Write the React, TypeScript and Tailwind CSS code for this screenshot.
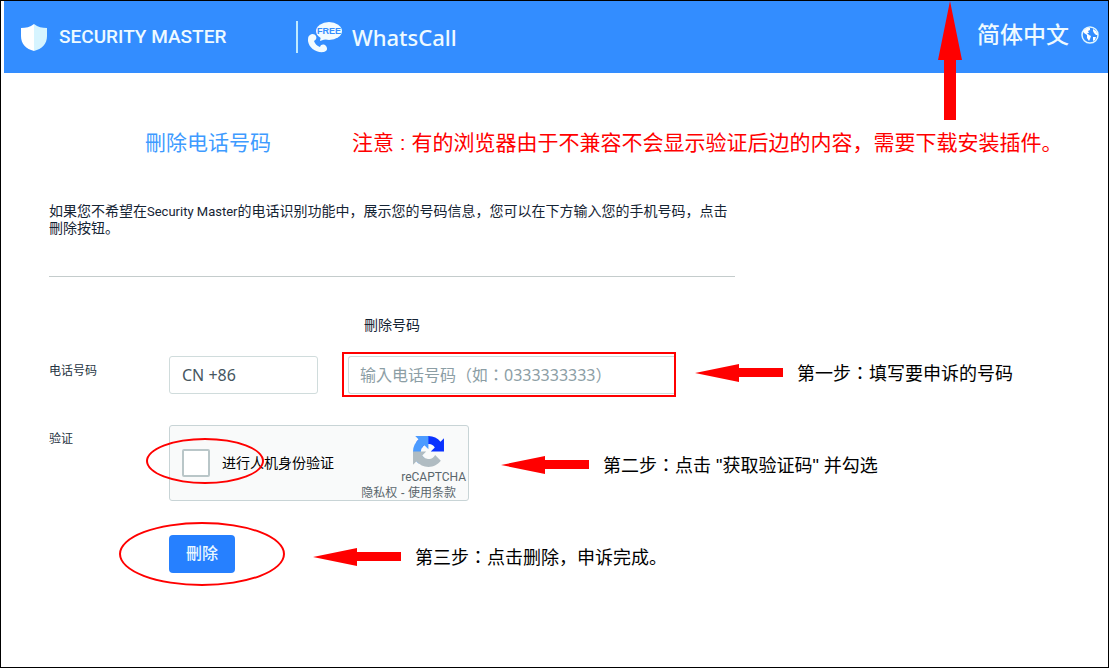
import type { ReactNode } from "react";

const CJK = "font-['Liberation_Sans','Noto_Sans_CJK_SC',sans-serif]";

function ShieldIcon() {
  return (
    <svg viewBox="0 0 26 27" className="h-[27px] w-[26px] shrink-0" aria-hidden="true">
      <path d="M13 0C9 3 5 4 0 4v8c0 8 5 13 13 15z" fill="#fff" />
      <path d="M13 0c4 3 8 4 13 4v8c0 8-5 13-13 15z" fill="#d6f4ff" />
    </svg>
  );
}

function FreeCallIcon() {
  return (
    <svg viewBox="0 0 34 31" className="h-[31px] w-[34px] shrink-0" aria-hidden="true">
      <path
        d="M2 13c2-2 5-1 6 1s0 4-2 5c1 3 3 5 6 6 1-3 4-3 6-1 2 3 1 5-2 6-8 1-15-4-16-11 0-3 0-5 2-6z"
        fill="#f2fbff"
      />
      <ellipse cx="21" cy="9" rx="13" ry="9" fill="#f2fbff" />
      <path d="M13 14l-1 5 6-2z" fill="#f2fbff" />
      <text
        x="21"
        y="12"
        textAnchor="middle"
        fontSize="9"
        fontWeight="700"
        fontFamily="Liberation Sans, sans-serif"
        fill="#338dff"
      >
        FREE
      </text>
    </svg>
  );
}

function GlobeIcon() {
  return (
    <svg viewBox="0 0 18 18" className="size-[18px] shrink-0" aria-hidden="true">
      <circle cx="9" cy="9" r="8" fill="none" stroke="#dff6ff" strokeWidth="1.5" />
      <path d="M2 5l4-3 3 0 0 2-2 1 1 2-2 0 2 2 2 1-1 3-1 2-2-3 0-3-3-2z" fill="#fff" />
      <path d="M12 3l3 2 2 4-2 0-2-2-1-2zM12 11l3 0-1 3-2 1z" fill="#fff" />
    </svg>
  );
}

function RecaptchaIcon() {
  return (
    <svg viewBox="0 0 64 64" className="size-[31px]" aria-hidden="true">
      <path
        d="M64 31.955a33 33 0 0 0-.037-1.377V4.687l-7.158 7.158C50.948 4.674 42.033.093 32.05.093c-10.389 0-19.622 4.96-25.458 12.64l11.734 11.856a15.55 15.55 0 0 1 4.754-5.334c2.05-1.6 4.952-2.906 8.968-2.906.485 0 .86.057 1.135.163 4.976.393 9.288 3.14 11.828 7.124l-8.307 8.306z"
        fill="#0a32ff"
      />
      <path
        d="M31.862.094a32 32 0 0 0-1.377.037H4.594l7.158 7.158C4.58 13.147 0 22.062 0 32.045c0 10.389 4.96 19.622 12.64 25.458l11.856-11.734a15.55 15.55 0 0 1-5.334-4.754c-1.6-2.05-2.906-4.952-2.906-8.968 0-.485.057-.86.163-1.135.393-4.976 3.14-9.288 7.124-11.828l8.306 8.307z"
        fill="#4c9bff"
      />
      <path
        d="M.001 32.045c.01.46.02.918.042 1.377v25.891l7.158-7.158c5.858 7.171 14.773 11.752 24.755 11.752 10.389 0 19.622-4.96 25.458-12.64L45.68 39.41a15.55 15.55 0 0 1-4.754 5.334c-2.05 1.6-4.952 2.906-8.968 2.906-.485 0-.86-.057-1.135-.163-4.976-.393-9.288-3.14-11.828-7.124l8.306-8.306z"
        fill="#b0bcc2"
      />
    </svg>
  );
}

function LeftArrow() {
  return (
    <svg viewBox="0 0 88 18" className="h-[18px] w-[88px] shrink-0" aria-hidden="true">
      <path d="M0 9L44 0v4h44v9H44v5z" fill="#f00" />
    </svg>
  );
}

function Step({ name, children }: { name: string; children: ReactNode }) {
  return (
    <div className="flex items-center gap-[14px] text-lg whitespace-nowrap text-black">
      <LeftArrow />
      <p>
        {name}
        {/* the TC face centres the colon in its cell */}
        <span className="font-['Noto_Sans_CJK_TC',sans-serif]">：</span>
        {children}
      </p>
    </div>
  );
}

export default function App() {
  return (
    <div className={`relative min-h-screen border border-black bg-white ${CJK}`}>
      <header className="ml-[3px] flex h-18 items-center bg-[#338dff] pr-[9px] pl-[17px] text-[#eefaff]">
        <a href="#security" className="flex w-[275px] items-center gap-3">
          <ShieldIcon />
          <span className="font-['Roboto',sans-serif] text-[19px] font-medium">SECURITY MASTER</span>
        </a>
        <a
          href="#whatscall"
          className="flex h-8 items-center gap-[10px] border-l-2 border-[#bfeaff] pl-[10px]"
        >
          <FreeCallIcon />
          <span className="font-['Noto_Sans',sans-serif] text-[22px] font-medium">WhatsCall</span>
        </a>
        <button type="button" className="ml-auto flex items-center gap-3 pb-1 text-[23px] font-medium">
          简体中文
          <GlobeIcon />
        </button>
      </header>

      <svg viewBox="0 0 24 119" className="absolute top-0 right-[146px] h-[119px] w-6" aria-hidden="true">
        <path d="M12 0l12 59h-6v60H6V59H0z" fill="#f00" />
      </svg>

      <main className="pt-[54px] pl-12">
        <div className="flex items-center whitespace-nowrap">
          <h1 className="w-[303px] pl-24 text-[21px] leading-8 text-[#3e9bff]">刪除电话号码</h1>
          <p className="text-[21px] leading-8 text-[#f00]">
            注意 : 有的浏览器由于不兼容不会显示验证后边的内容，需要下载安装插件。
          </p>
        </div>

        <p className="mt-11 w-[686px] border-b border-[#c4cccc] pb-10 font-['Roboto','Noto_Sans_CJK_SC',sans-serif] text-sm leading-4 whitespace-nowrap text-[#152434]">
          如果您不希望在<span className="text-[13px]">Security Master</span>
          的电话识别功能中，展示您的号码信息，您可以在下方输入您的手机号码，点击
          <br />
          刪除按钮。
        </p>

        <form>
          <label htmlFor="number" className="mt-10 ml-[315px] block w-fit text-sm leading-4 text-[#152434]">
            刪除号码
          </label>

          <div className="mt-[19px] flex items-center">
            <label htmlFor="country" className="w-[120px] pb-2 text-xs text-[#263442]">
              电话号码
            </label>
            <input
              id="country"
              defaultValue="CN +86"
              className="h-[38px] w-[149px] rounded-[3px] border border-[#d0dcdc] px-3 font-['Noto_Sans',sans-serif] text-base text-[#46565f]"
            />
            <div className="ml-6 flex h-[45px] w-[334px] items-center border-2 border-[#f00] pl-1">
              <input
                id="number"
                type="tel"
                placeholder="输入电话号码（如：0333333333）"
                className="h-[38px] w-full rounded-l-[3px] border border-r-0 border-[#d0dcdc] px-[11px] font-['Noto_Sans','Noto_Sans_CJK_TC',sans-serif] text-base placeholder:text-[#8c9ea5]"
              />
            </div>
            <div className="ml-[19px] pb-1">
              <Step name="第一步">填写要申诉的号码</Step>
            </div>
          </div>

          <div className="mt-7 flex items-start">
            <label htmlFor="verify" className="w-[120px] pt-1 text-xs leading-5 text-[#263442]">
              验证
            </label>
            <div className="relative flex h-[76px] w-[300px] justify-between rounded-[3px] border border-[#c8d4d6] bg-[#f9fafa] pr-[2px] pl-3">
              <label className="flex items-center gap-3 text-sm text-black">
                <input
                  id="verify"
                  type="checkbox"
                  className="size-7 appearance-none rounded-[2px] border-2 border-[#b9c6c8] bg-white"
                />
                进行人机身份验证
              </label>
              <div className="flex flex-col items-end pt-[10px] text-[#5a666c]">
                <span className="pr-[22px]">
                  <RecaptchaIcon />
                </span>
                <span className="font-['Roboto',sans-serif] text-xs leading-5">reCAPTCHA</span>
                <span className="pr-[10px] text-xs leading-3">
                  <a href="#privacy">隐私权</a> - <a href="#terms">使用条款</a>
                </span>
              </div>
              <span className="pointer-events-none absolute top-3 -left-6 h-[46px] w-[118px] rounded-[50%] border-2 border-[#f00]" />
            </div>
            <div className="mt-[25px] ml-8">
              <Step name="第二步">点击 "获取验证码" 并勾选</Step>
            </div>
          </div>

          <div className="mt-[21px] ml-[70px] flex items-center">
            <div className="flex h-16 w-[166px] items-center rounded-[50%] border-2 border-[#f00] pl-12">
              <button
                type="button"
                className="h-[38px] w-[66px] rounded-[4px] bg-[#2680ff] text-base font-medium text-[#e8f7ff]"
              >
                刪除
              </button>
            </div>
            <div className="ml-7 pt-[6px]">
              <Step name="第三步">点击删除，申诉完成。</Step>
            </div>
          </div>
        </form>
      </main>
    </div>
  );
}
